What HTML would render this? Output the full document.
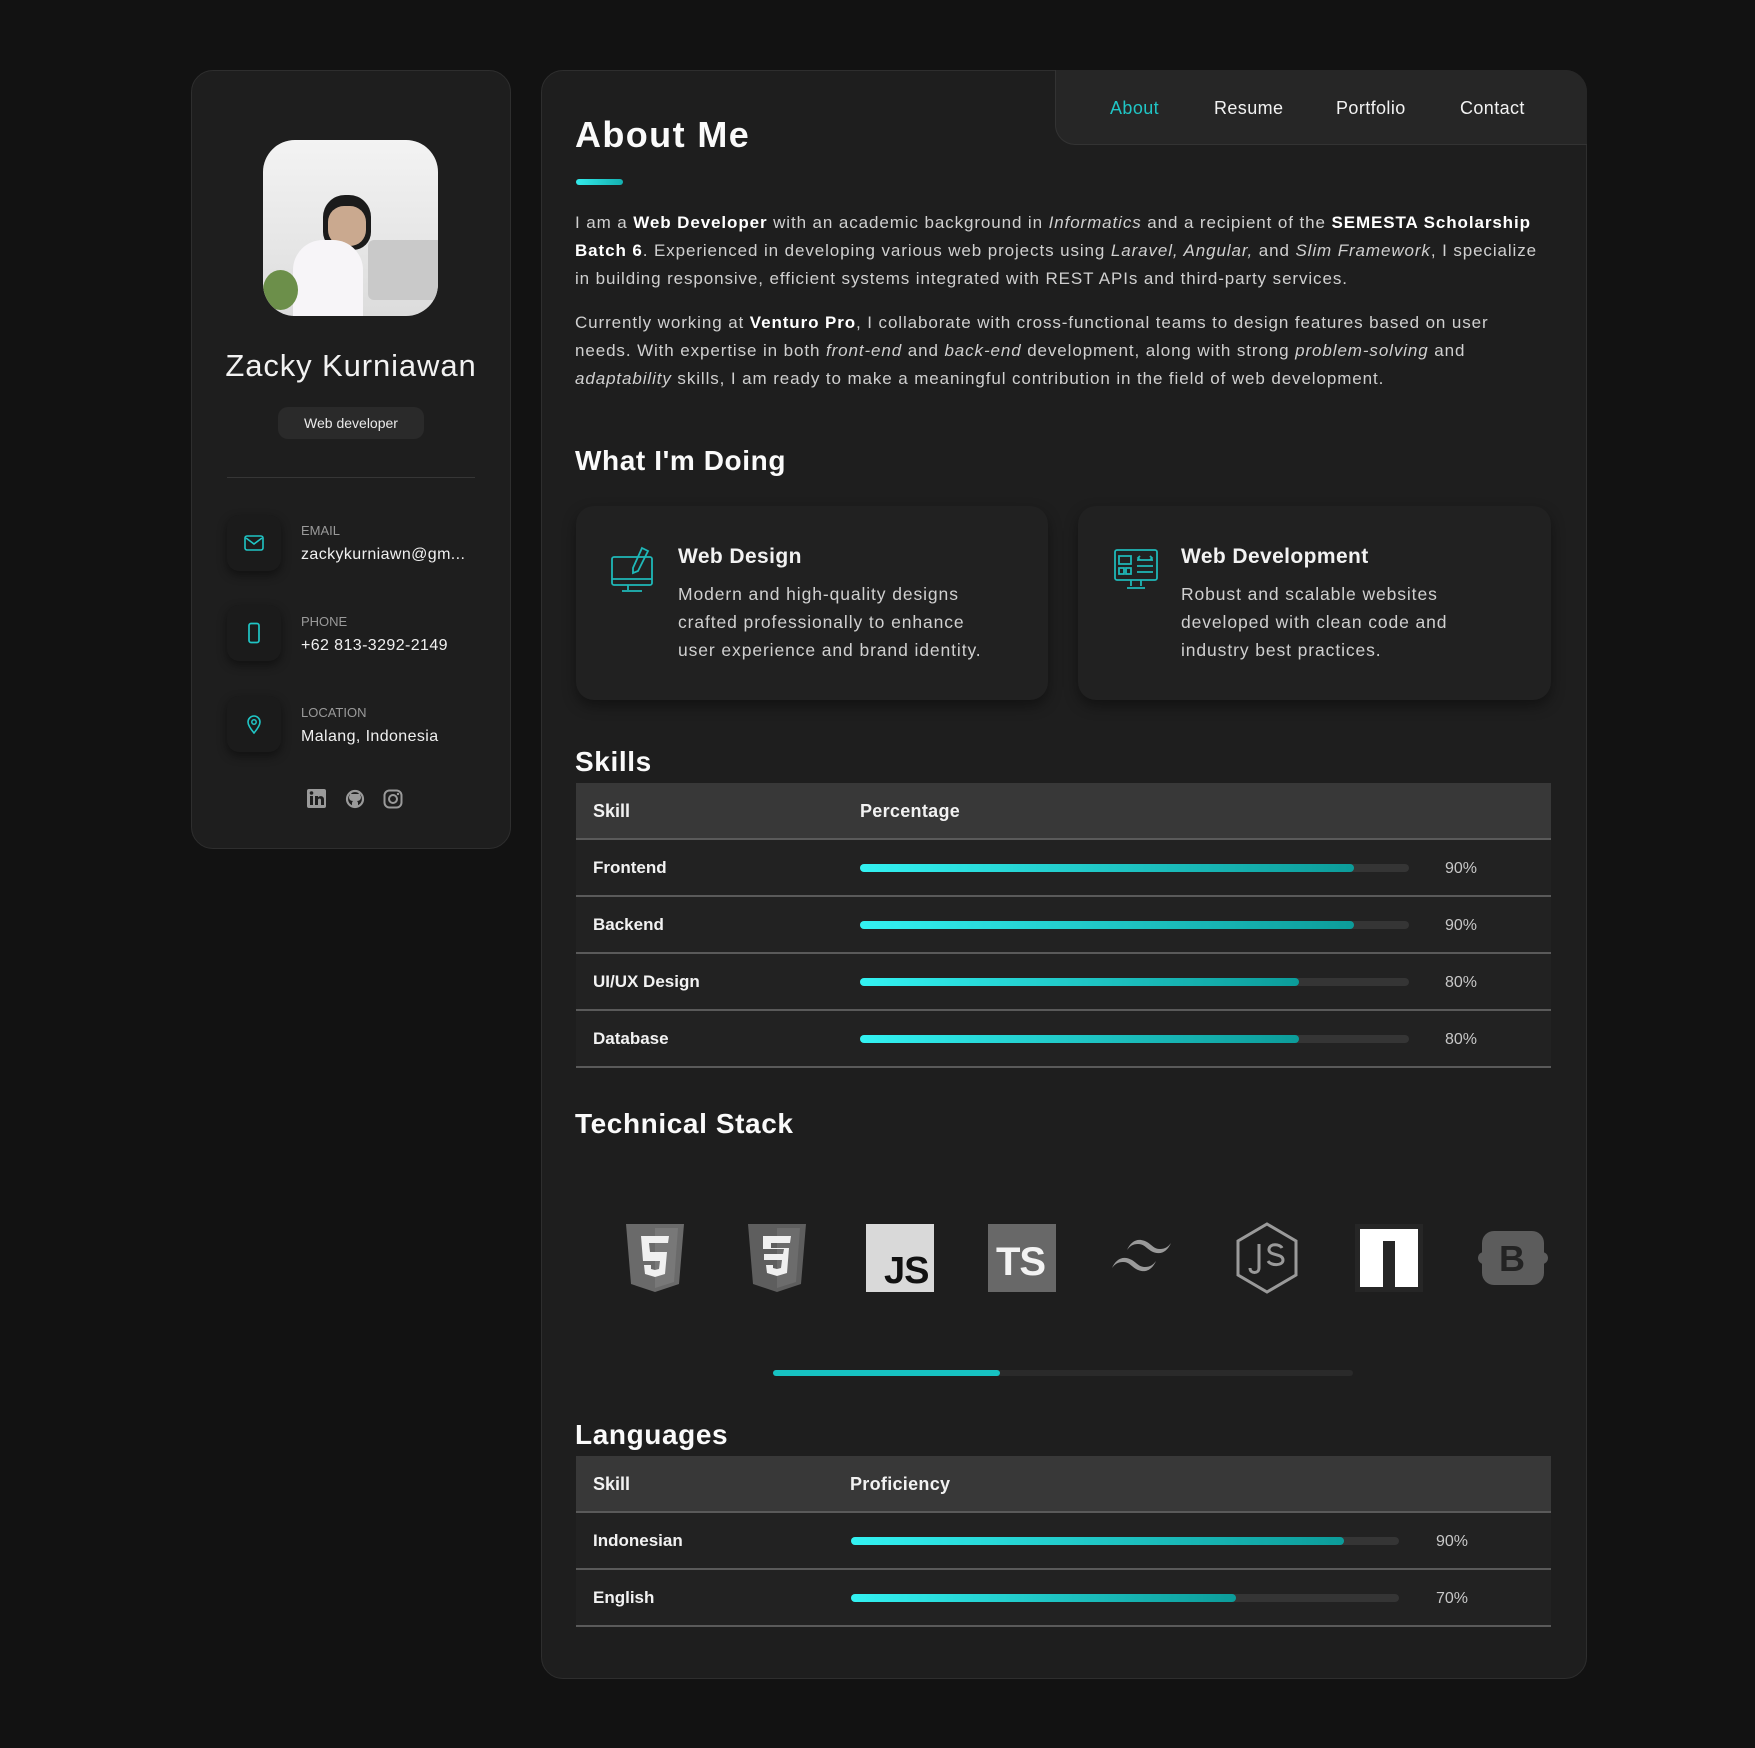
<!DOCTYPE html>
<html><head><meta charset="utf-8"><style>
*{margin:0;padding:0;box-sizing:border-box}
body{width:1755px;height:1748px;background:#121212;font-family:"Liberation Sans",sans-serif;color:#d6d6d6;position:relative;overflow:hidden}
.a{position:absolute}
.card{background:#1e1e1e;border:1px solid #2e2e2e;border-radius:22px}
.acc{color:#20c5c5}
.wh{color:#f2f2f2}
p.t{font-size:17px;line-height:28px;color:#d0d0d0;white-space:nowrap;letter-spacing:0.9px}
p.t b{color:#fff;font-weight:bold}
h2{font-size:28px;color:#fafafa;font-weight:bold;letter-spacing:0.6px}
.ib{width:54px;height:56px;border-radius:12px;background:#1b1b1b;box-shadow:0 4px 10px rgba(0,0,0,.45);display:flex;align-items:center;justify-content:center}
.lab{font-size:13px;color:#9a9a9a}
.val{font-size:16px;color:#f0f0f0;letter-spacing:0.4px}
.svc{background:#212121;border-radius:18px;box-shadow:0 6px 14px rgba(0,0,0,.4)}
.row{left:576px;width:975px;border-bottom:2px solid #5a5a5a;font-size:17px;font-weight:bold;color:#f0f0f0}
.hd{background:#383838}
.bar{height:8px;border-radius:4px;background:#353535}
.fill{height:8px;border-radius:4px;background:linear-gradient(90deg,#33f2f2,#0c9c9a)}
.pc{font-size:16px;color:#c8c8c8}
</style></head><body>

<div class="a card" style="left:191px;top:70px;width:320px;height:779px"></div>
<div class="a" style="left:263px;top:140px;width:175px;height:176px;border-radius:32px;overflow:hidden;background:linear-gradient(180deg,#f3f3f3 0%,#e6e6e6 60%,#dcdcdc 100%)">
  <div class="a" style="left:60px;top:55px;width:48px;height:55px;border-radius:22px 22px 18px 18px;background:#1b1b1b"></div>
  <div class="a" style="left:65px;top:66px;width:38px;height:40px;border-radius:16px;background:#caa98f"></div>
  <div class="a" style="left:30px;top:100px;width:70px;height:80px;border-radius:30px 30px 0 0;background:#f7f5f8"></div>
  <div class="a" style="left:105px;top:100px;width:75px;height:60px;background:#c9c9c9;border-radius:6px"></div>
  <div class="a" style="left:0;top:130px;width:35px;height:40px;border-radius:50%;background:#6c8f4a"></div>
</div>
<div class="a wh" style="left:191px;top:348px;width:320px;text-align:center;font-size:31px;letter-spacing:0.9px">Zacky Kurniawan</div>
<div class="a" style="left:278px;top:407px;width:146px;height:32px;border-radius:10px;background:#2a2a2a;font-size:14px;color:#eaeaea;text-align:center;line-height:32px">Web developer</div>
<div class="a" style="left:227px;top:477px;width:248px;height:1px;background:#363636"></div>

<div class="a ib" style="left:227px;top:515px"><svg width="20" height="16" viewBox="0 0 20 16"><rect x="1" y="1" width="18" height="14" rx="2" fill="none" stroke="#20c5c5" stroke-width="1.6"/><path d="M2 3l8 6 8-6" fill="none" stroke="#20c5c5" stroke-width="1.6"/></svg></div>
<div class="a lab" style="left:301px;top:523px">EMAIL</div>
<div class="a val" style="left:301px;top:546px">zackykurniawn@gm...</div>
<div class="a ib" style="left:227px;top:605px"><svg width="14" height="22" viewBox="0 0 14 22"><rect x="2" y="1.5" width="10" height="19" rx="2" fill="none" stroke="#20c5c5" stroke-width="1.7"/></svg></div>
<div class="a lab" style="left:301px;top:614px">PHONE</div>
<div class="a val" style="left:301px;top:637px">+62 813-3292-2149</div>
<div class="a ib" style="left:227px;top:696px"><svg width="16" height="20" viewBox="0 0 16 20"><path d="M8 19C3 13 2 10 2 8a6 6 0 0112 0c0 2-1 5-6 11z" fill="none" stroke="#20c5c5" stroke-width="1.6"/><circle cx="8" cy="8" r="2.2" fill="none" stroke="#20c5c5" stroke-width="1.5"/></svg></div>
<div class="a lab" style="left:301px;top:705px">LOCATION</div>
<div class="a val" style="left:301px;top:728px">Malang, Indonesia</div>

<svg class="a" style="left:307px;top:789px" width="19" height="19" viewBox="0 0 19 19"><rect width="19" height="19" rx="2" fill="#9a9a9a"/><rect x="3" y="7" width="3" height="9" fill="#1e1e1e"/><circle cx="4.5" cy="4" r="1.8" fill="#1e1e1e"/><path d="M8 7h3v1.5c1-2 6-2 6 2V16h-3v-5c0-2-3-2-3 0v5H8z" fill="#1e1e1e"/></svg>
<svg class="a" style="left:345px;top:789px" width="20" height="20" viewBox="0 0 20 20"><circle cx="10" cy="10" r="8" fill="none" stroke="#9a9a9a" stroke-width="2.2"/><path d="M7 18v-4c0-1 1-2 1-2-3 0-4-2-4-4 0-1 1-2 1-2l0-2 2 1h6l2-1v2s1 1 1 2c0 2-1 4-4 4 0 0 1 1 1 2v4" fill="#9a9a9a"/></svg>
<svg class="a" style="left:383px;top:789px" width="20" height="20" viewBox="0 0 20 20"><rect x="1.5" y="1.5" width="17" height="17" rx="5" fill="none" stroke="#9a9a9a" stroke-width="2"/><circle cx="10" cy="10" r="4" fill="none" stroke="#9a9a9a" stroke-width="2"/><circle cx="15" cy="5" r="1.2" fill="#9a9a9a"/></svg>

<div class="a card" style="left:541px;top:70px;width:1046px;height:1609px"></div>
<div class="a" style="left:1055px;top:70px;width:532px;height:75px;background:#262626;border:1px solid #333;border-top:none;border-right:none;border-radius:0 22px 0 20px"></div>
<div class="a" style="left:1110px;top:98px;font-size:18px;color:#20c5c5;letter-spacing:0.4px">About</div>
<div class="a wh" style="left:1214px;top:98px;font-size:18px;letter-spacing:0.4px">Resume</div>
<div class="a wh" style="left:1336px;top:98px;font-size:18px;letter-spacing:0.4px">Portfolio</div>
<div class="a wh" style="left:1460px;top:98px;font-size:18px;letter-spacing:0.4px">Contact</div>

<div class="a" style="left:575px;top:114px;font-size:36px;font-weight:bold;color:#fafafa;letter-spacing:1.4px">About Me</div>
<div class="a" style="left:576px;top:179px;width:47px;height:6px;border-radius:3px;background:linear-gradient(90deg,#33eaea,#14b0b0)"></div>

<p class="a t" style="left:575px;top:209px">I am a <b>Web Developer</b> with an academic background in <i>Informatics</i> and a recipient of the <b>SEMESTA Scholarship</b><br><b>Batch 6</b>. Experienced in developing various web projects using <i>Laravel, Angular,</i> and <i>Slim Framework</i>, I specialize<br>in building responsive, efficient systems integrated with REST APIs and third-party services.</p>
<p class="a t" style="left:575px;top:309px">Currently working at <b>Venturo Pro</b>, I collaborate with cross-functional teams to design features based on user<br>needs. With expertise in both <i>front-end</i> and <i>back-end</i> development, along with strong <i>problem-solving</i> and<br><i>adaptability</i> skills, I am ready to make a meaningful contribution in the field of web development.</p>

<h2 class="a" style="left:575px;top:445px">What I'm Doing</h2>

<div class="a svc" style="left:576px;top:506px;width:472px;height:194px"></div>
<svg class="a" style="left:610px;top:545px" width="46" height="50" viewBox="0 0 46 50"><g fill="none" stroke="#1fb8b8" stroke-width="1.8"><rect x="2" y="12" width="40" height="28" rx="2"/><path d="M2 34h40M18 40v5M12 46h20"/><path d="M32 3l6 3-10 20-5 2 0-5z"/></g></svg>
<div class="a wh" style="left:678px;top:545px;font-size:21px;font-weight:bold;letter-spacing:0.4px">Web Design</div>
<p class="a t" style="left:678px;top:580px;font-size:17.5px">Modern and high-quality designs<br>crafted professionally to enhance<br>user experience and brand identity.</p>

<div class="a svc" style="left:1078px;top:506px;width:473px;height:194px"></div>
<svg class="a" style="left:1113px;top:548px" width="46" height="44" viewBox="0 0 46 44"><g fill="none" stroke="#1fb8b8" stroke-width="1.8"><rect x="2" y="2" width="42" height="30" rx="2"/><path d="M18 38v-6M28 38v-6M14 40h18M6 8h12v8H6zM6 20h5v6H6zM13 20h5v6h-5zM24 12h16M24 18h16M24 24h16"/><path d="M27 8l-2 2 2 2M37 8l2 2-2 2"/></g></svg>
<div class="a wh" style="left:1181px;top:545px;font-size:21px;font-weight:bold;letter-spacing:0.4px">Web Development</div>
<p class="a t" style="left:1181px;top:580px;font-size:17.5px">Robust and scalable websites<br>developed with clean code and<br>industry best practices.</p>

<h2 class="a" style="left:575px;top:746px">Skills</h2>
<div class="a row hd" style="top:783px;height:57px"></div>
<div class="a wh" style="left:593px;top:801px;font-size:18px;font-weight:bold">Skill</div>
<div class="a wh" style="left:860px;top:801px;font-size:18px;font-weight:bold;letter-spacing:0.3px">Percentage</div>

<div class="a row" style="top:840px;height:57px;background:#222"></div>
<div class="a row" style="top:897px;height:57px;background:#222"></div>
<div class="a row" style="top:954px;height:57px;background:#222"></div>
<div class="a row" style="top:1011px;height:57px;background:#222"></div>
<div class="a wh" style="left:593px;top:858px;font-size:17px;font-weight:bold">Frontend</div>
<div class="a wh" style="left:593px;top:915px;font-size:17px;font-weight:bold">Backend</div>
<div class="a wh" style="left:593px;top:972px;font-size:17px;font-weight:bold">UI/UX Design</div>
<div class="a wh" style="left:593px;top:1029px;font-size:17px;font-weight:bold">Database</div>
<div class="a bar" style="left:860px;top:864px;width:549px"><div class="fill" style="width:494px"></div></div>
<div class="a bar" style="left:860px;top:921px;width:549px"><div class="fill" style="width:494px"></div></div>
<div class="a bar" style="left:860px;top:978px;width:549px"><div class="fill" style="width:439px"></div></div>
<div class="a bar" style="left:860px;top:1035px;width:549px"><div class="fill" style="width:439px"></div></div>
<div class="a pc" style="left:1445px;top:860px">90%</div>
<div class="a pc" style="left:1445px;top:917px">90%</div>
<div class="a pc" style="left:1445px;top:974px">80%</div>
<div class="a pc" style="left:1445px;top:1031px">80%</div>

<h2 class="a" style="left:575px;top:1108px">Technical Stack</h2>
<svg class="a" style="left:624px;top:1222px" width="62" height="72" viewBox="0 0 62 72"><path d="M2 2h58l-5 60-24 8-24-8z" fill="#6a6a6a"/><path d="M31 6v60l19-6 4-54z" fill="#787878"/><path d="M17 14h28l-1 7H25l1 9h17l-2 22-10 3-10-3-1-9h7l0 4 4 1 4-1 1-8H19z" fill="#f0f0f0"/></svg>
<svg class="a" style="left:746px;top:1222px" width="62" height="72" viewBox="0 0 62 72"><path d="M2 2h58l-5 60-24 8-24-8z" fill="#5e5e5e"/><path d="M31 6v60l19-6 4-54z" fill="#6c6c6c"/><path d="M17 14h28l-1 7H26l-1 0v5h18l-2 25-10 3-10-3-1-8h7v3l4 1 4-1 1-8H18l0-6h19l1-5H17z" fill="#f0f0f0"/></svg>
<div class="a" style="left:866px;top:1224px;width:68px;height:68px;background:#d9d9d9"><span class="a" style="left:18px;top:26px;font-size:38px;font-weight:bold;color:#111;letter-spacing:-1px">JS</span></div>
<div class="a" style="left:988px;top:1224px;width:68px;height:68px;background:#686868"><span class="a" style="left:8px;top:16px;font-size:40px;font-weight:bold;color:#f3f3f3;letter-spacing:-1px">TS</span></div>
<svg class="a" style="left:1110px;top:1238px" width="68" height="42" viewBox="0 0 68 42"><path d="M17 12c4-9 11-13 20-8 5 3 7 7 13 7 5 0 8-2 11-6-4 9-11 13-20 8-5-3-7-7-13-7-5 0-8 2-11 6zM2 30c4-9 11-13 20-8 5 3 7 7 13 7 5 0 8-2 11-6-4 9-11 13-20 8-5-3-7-7-13-7-5 0-8 2-11 6z" fill="#9a9a9a"/></svg>
<svg class="a" style="left:1234px;top:1222px" width="66" height="72" viewBox="0 0 66 72"><path d="M33 2l29 17v34L33 70 4 53V19z" fill="none" stroke="#9a9a9a" stroke-width="3"/><path d="M25 22v24c0 6-9 6-9 0" fill="none" stroke="#9a9a9a" stroke-width="3"/><path d="M48 26c-2-4-12-5-13 1-1 7 14 4 14 11 0 6-12 6-15 1" fill="none" stroke="#9a9a9a" stroke-width="3"/></svg>
<div class="a" style="left:1355px;top:1224px;width:68px;height:68px;background:#262626"><div class="a" style="left:5px;top:5px;width:58px;height:58px;background:#fff"></div><div class="a" style="left:28px;top:17px;width:12px;height:46px;background:#262626"></div></div>
<div class="a" style="left:1482px;top:1231px;width:62px;height:54px;border-radius:12px;background:#5c5c5c"></div>
<div class="a" style="left:1478px;top:1252px;width:70px;height:12px;border-radius:6px;background:#5c5c5c"></div>
<span class="a" style="left:1499px;top:1238px;font-size:36px;font-weight:bold;color:#232323">B</span>

<div class="a" style="left:773px;top:1370px;width:580px;height:6px;border-radius:3px;background:#2a2a2a"><div style="width:227px;height:6px;border-radius:3px;background:#17c2c2"></div></div>

<h2 class="a" style="left:575px;top:1419px">Languages</h2>
<div class="a row hd" style="top:1456px;height:57px"></div>
<div class="a wh" style="left:593px;top:1474px;font-size:18px;font-weight:bold">Skill</div>
<div class="a wh" style="left:850px;top:1474px;font-size:18px;font-weight:bold;letter-spacing:0.3px">Proficiency</div>
<div class="a row" style="top:1513px;height:57px;background:#222"></div>
<div class="a row" style="top:1570px;height:57px;background:#222"></div>
<div class="a wh" style="left:593px;top:1531px;font-size:17px;font-weight:bold">Indonesian</div>
<div class="a wh" style="left:593px;top:1588px;font-size:17px;font-weight:bold">English</div>
<div class="a bar" style="left:851px;top:1537px;width:548px"><div class="fill" style="width:493px"></div></div>
<div class="a bar" style="left:851px;top:1594px;width:548px"><div class="fill" style="width:385px"></div></div>
<div class="a pc" style="left:1436px;top:1533px">90%</div>
<div class="a pc" style="left:1436px;top:1590px">70%</div>
</body></html>
